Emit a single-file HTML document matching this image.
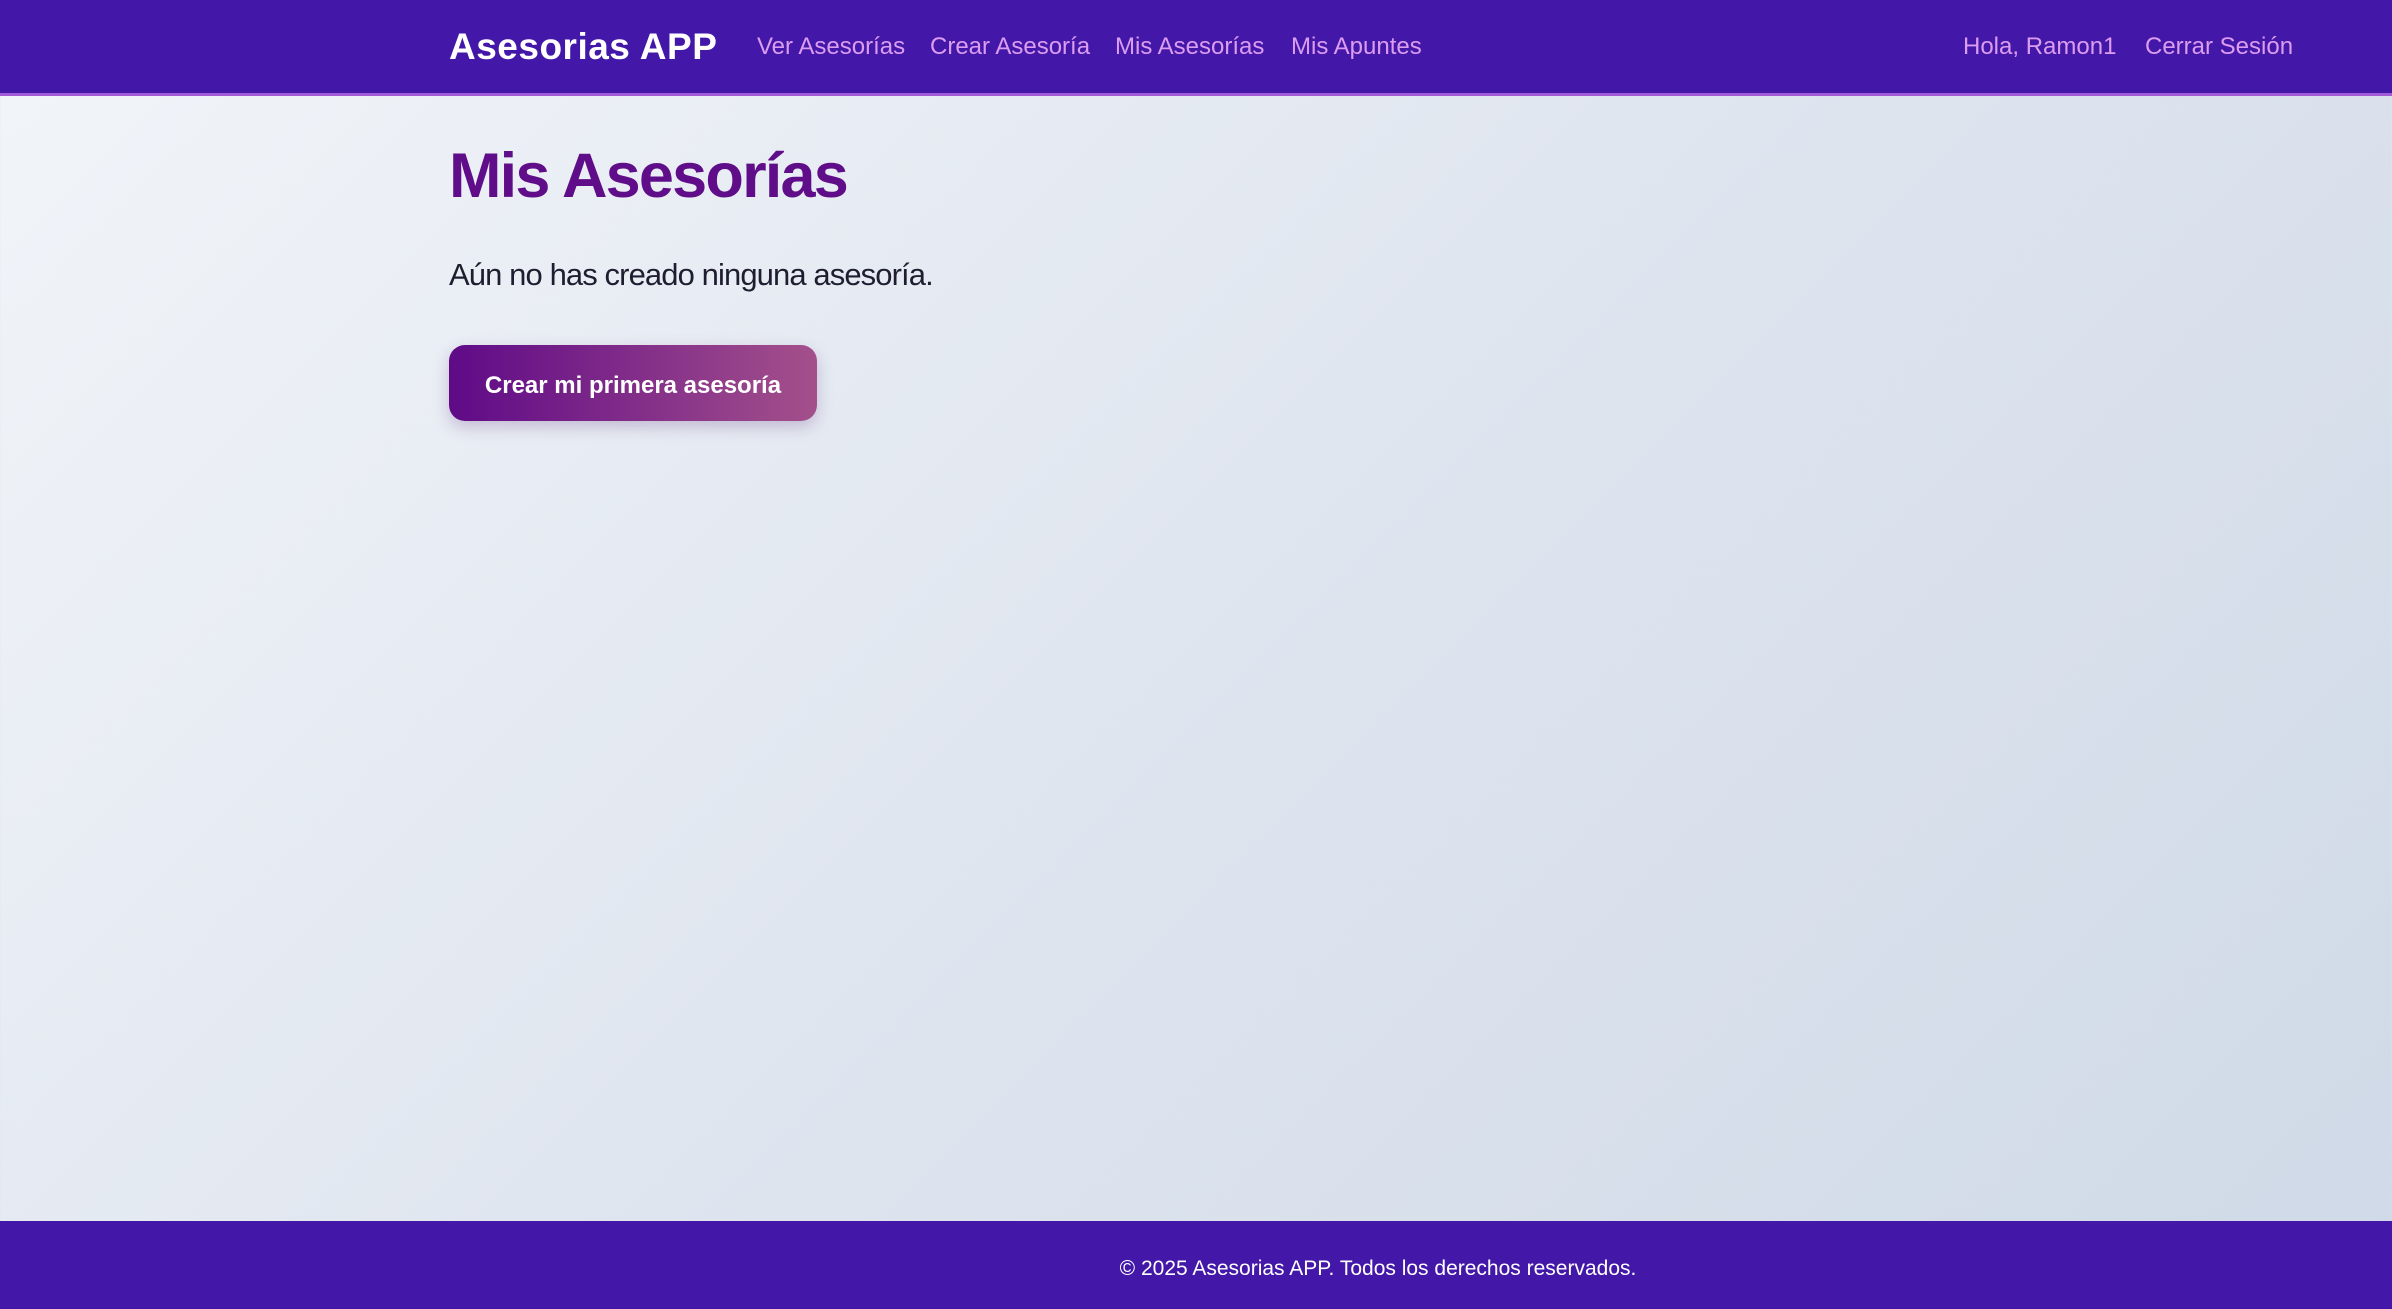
<!DOCTYPE html>
<html><head><meta charset="utf-8"><style>
*{margin:0;padding:0;box-sizing:border-box}
html,body{width:2392px;height:1309px;overflow:hidden}
body{font-family:"Liberation Sans",sans-serif;background:linear-gradient(135deg,#f2f5f9 0%,#dfe5ef 50%,#cfd9e7 100%);position:relative}
nav{position:absolute;top:0;left:0;width:2392px;height:96px;background:#4318a8;border-bottom:3px solid #a35ad6}
.brand{position:absolute;left:449px;top:26px;font-size:37px;font-weight:bold;color:#fff;white-space:nowrap;letter-spacing:0.5px}
.l{position:absolute;top:33px;font-size:24px;color:#dc9cf0;white-space:nowrap}
h1{position:absolute;left:449px;top:140px;font-size:63px;font-weight:bold;color:#5f0d88;letter-spacing:-1.8px}
p.t{position:absolute;left:449px;top:257px;font-size:31px;color:#1e1e30;letter-spacing:-0.9px}
.btn{position:absolute;left:449px;top:345px;width:368px;height:76px;border-radius:16px;background:linear-gradient(90deg,#5f0a87,#a4508b);color:#fff;font-size:24px;font-weight:bold;display:flex;align-items:center;justify-content:center;padding-top:5px;box-shadow:0 6px 16px rgba(90,40,120,.25)}
footer{position:absolute;left:0;top:1221px;width:2392px;height:88px;background:#4318a8;color:#fff;font-size:21px}
footer span{position:absolute;left:0;width:2756px;text-align:center;top:36px}
</style></head><body>
<nav>
<div class="brand">Asesorias APP</div>
<div class="l" style="left:757px">Ver Asesorías</div>
<div class="l" style="left:930px">Crear Asesoría</div>
<div class="l" style="left:1115px">Mis Asesorías</div>
<div class="l" style="left:1291px">Mis Apuntes</div>
<div class="l" style="left:1963px">Hola, Ramon1</div>
<div class="l" style="left:2145px">Cerrar Sesión</div>
</nav>
<h1>Mis Asesorías</h1>
<p class="t">Aún no has creado ninguna asesoría.</p>
<div class="btn">Crear mi primera asesoría</div>
<footer><span>© 2025 Asesorias APP. Todos los derechos reservados.</span></footer>
</body></html>
